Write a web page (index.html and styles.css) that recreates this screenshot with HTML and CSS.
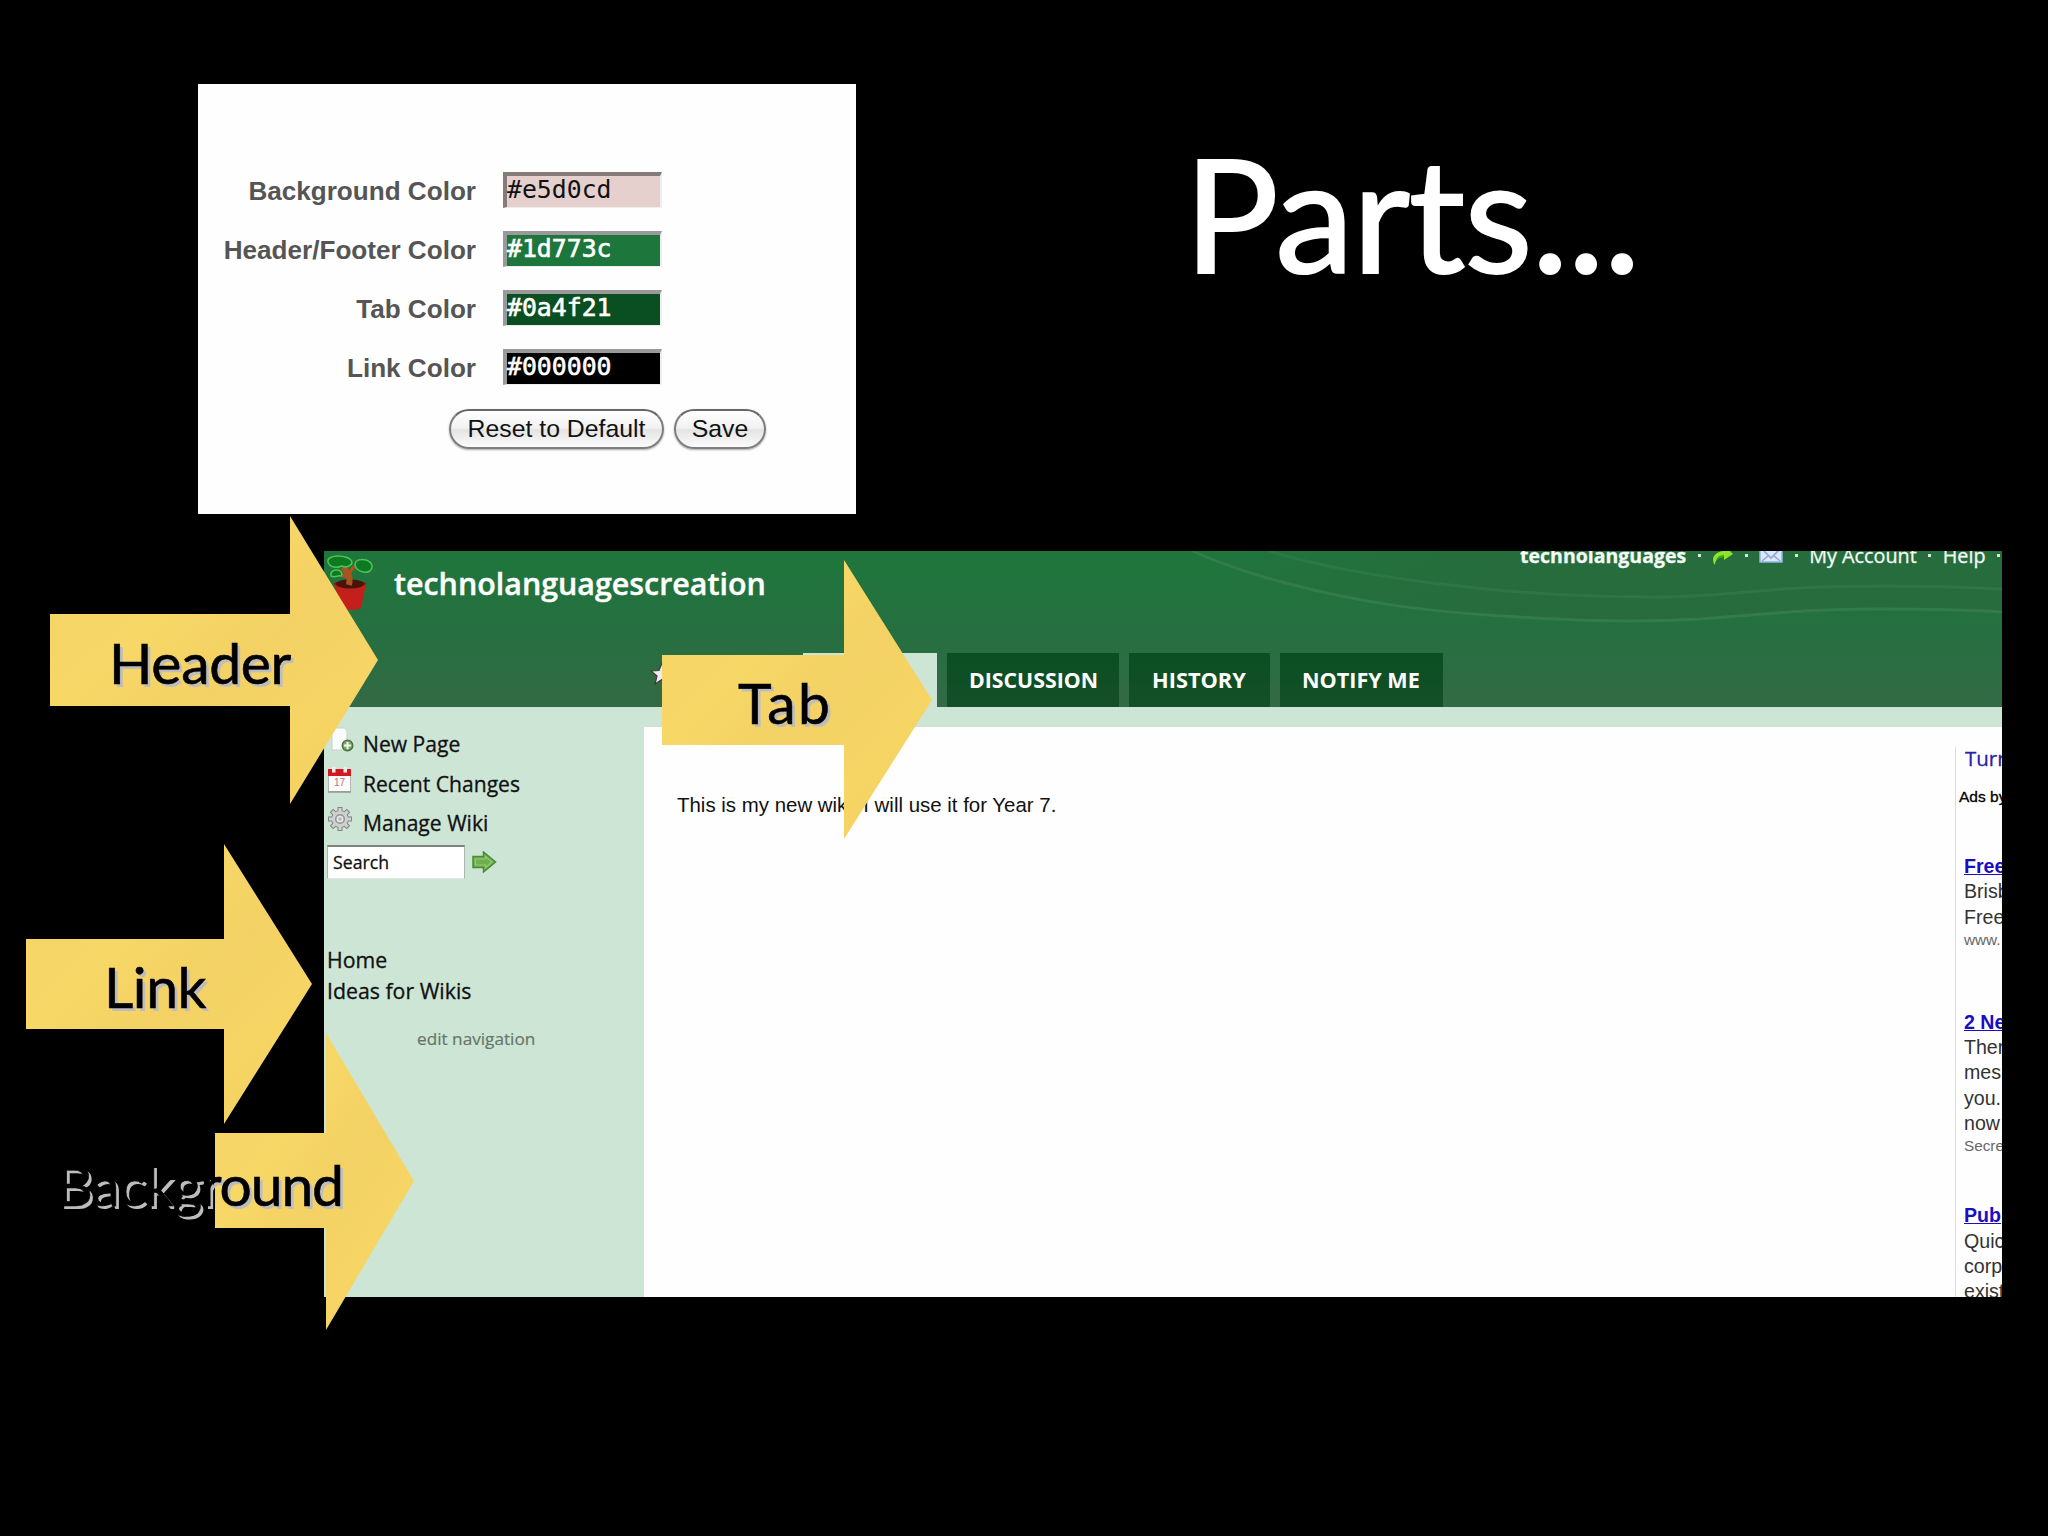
FILE: index.html
```
<!DOCTYPE html>
<html lang="en">
<head>
    <meta charset="UTF-8">
    <meta name="viewport" content="width=device-width, initial-scale=1.0">
    <title>Parts...</title>
    <link rel="stylesheet" href="styles.css">
</head>
<body>
    <div class="slide">
        <div class="top-row">
            <!-- Colour settings -->
            <div class="settings">
                <div class="setting">
                    <label>Background Color</label>
                    <div class="field field-background">#e5d0cd</div>
                </div>
                <div class="setting">
                    <label>Header/Footer Color</label>
                    <div class="field field-header">#1d773c</div>
                </div>
                <div class="setting">
                    <label>Tab Color</label>
                    <div class="field field-tab">#0a4f21</div>
                </div>
                <div class="setting">
                    <label>Link Color</label>
                    <div class="field field-link">#000000</div>
                </div>
                <div class="buttons">
                    <button class="reset">Reset to Default</button>
                    <button class="save">Save</button>
                </div>
            </div>
            <h1>Parts...</h1>
        </div>

        <!-- Wiki page -->
        <div class="wiki">
            <div class="wiki-header">
                <svg class="curves" width="1678" height="156" viewBox="0 0 1678 156">
                    <defs>
                        <linearGradient id="shade" x1="0" x2="1" y1="0" y2="0">
                            <stop offset="0" stop-color="#286a3c" stop-opacity="0"/>
                            <stop offset="0.4" stop-color="#286a3c"/>
                            <stop offset="1" stop-color="#286a3c"/>
                        </linearGradient>
                    </defs>
                    <path fill="url(#shade)" opacity="0.8" d="M868 0C900 14 930 24 962 32C1040 53 1110 61 1180 65C1240 69 1300 72 1376 68C1440 63 1500 57 1560 58C1610 58 1650 59 1678 61V0Z"/>
                    <path class="curve" d="M868 0C900 14 930 24 962 32C1040 53 1110 61 1180 65C1240 69 1300 72 1376 68C1440 63 1500 57 1560 58C1610 58 1650 59 1678 61"/>
                    <path class="curve faint" d="M945 0C990 14 1060 27 1126 34C1190 42 1250 46 1330 46C1400 46 1440 37 1500 36C1570 34 1620 35 1678 38"/>
                </svg>
                <div class="brand-row">
                    <svg class="logo" width="50" height="60" viewBox="0 0 50 60">
                        <path fill="#8c1511" d="M10 32Q26 25 42 32L41 36H11Z"/>
                        <path fill="#c51f1c" d="M10 33Q26 42 42 33L37 57Q29 61 18 57Z"/>
                        <ellipse cx="26" cy="33" rx="14" ry="4.5" fill="#4b1409"/>
                        <path fill="none" stroke="#a8541f" stroke-width="6" d="M25 34C27 26 24 22 19 16"/>
                        <path fill="none" stroke="#a8541f" stroke-width="3.5" d="M25 24Q28 15 34 15M24 26L14 23"/>
                        <g fill="#0c7a20" stroke="#4fc356" stroke-width="1.5">
                            <path d="M4 11C3 7 9 5 14 5C20 5 27 7 28 11C28 15 22 17 18 15C13 17 6 17 4 11Z"/>
                            <path d="M31 14C31 8 38 8 42 9C48 11 50 16 46 20C41 23 32 20 31 14Z"/>
                            <path d="M7 25C6 20 10 19 13 19C17 19 19 23 17 25C14 24 11 27 7 25Z"/>
                        </g>
                    </svg>
                    <div class="wiki-name">technolanguagescreation</div>
                    <div class="account-nav">
                        <b>technolanguages</b>
                        <i></i>
                        <svg width="21" height="18" viewBox="0 0 21 18">
                            <path fill="#8fe32a" d="M11 0C4 1 1 5 1 9Q1 12 3 14C3 9 6 6 12 6V9L21 3L18 0Z"/>
                            <path fill="#2fae1b" d="M12 4Q5 4 4 10Q7 6 12 6Z"/>
                        </svg>
                        <i></i>
                        <svg width="24" height="18" viewBox="0 0 24 18">
                            <path fill="#dfe8fa" stroke="#8eb4e8" stroke-width="1.5" d="M1 -2H23V11H1Z"/>
                            <path fill="none" stroke="#8fa9d6" stroke-width="1.6" d="M3 -2L12 7L21 -2M3 10L9 5M21 10L15 5"/>
                        </svg>
                        <i></i>
                        <span>My Account</span>
                        <i></i>
                        <span>Help</span>
                        <i></i>
                    </div>
                </div>
                <div class="tabs">
                    <svg class="star" width="24" height="24" viewBox="0 0 24 24">
                        <path fill="#eeeaf0" stroke="#3d3a3d" stroke-width="1.2" d="M12 1L15 8.500L23 9L17 14L19 22L12 17.500L5 22L7 14L1 9L9 8.500Z"/>
                    </svg>
                    <div class="tab tab-active"></div>
                    <div class="tab tab-discussion">DISCUSSION</div>
                    <div class="tab tab-history">HISTORY</div>
                    <div class="tab tab-notify">NOTIFY ME</div>
                </div>
            </div>

            <div class="wiki-body">
                <div class="sidebar">
                    <div class="tool">
                        <svg width="27" height="26" viewBox="0 0 27 26">
                            <path fill="#fafcfb" stroke="#c3d3c8" d="M5 1H18L20 4V23H5Z"/>
                            <circle cx="20.500" cy="18.500" r="5.300" fill="#7da565" stroke="#456f38" stroke-width="1.3"/>
                            <path stroke="#f2f8ee" stroke-width="2" d="M20.500 15V22M17 18.500H24"/>
                        </svg>
                        <span>New Page</span>
                    </div>
                    <div class="tool">
                        <svg width="27" height="26" viewBox="0 0 27 26">
                            <path fill="#fbfbfb" stroke="#b5b5b5" d="M1.500 2.500H23.500V24.500H1.500Z"/>
                            <path stroke="#8d9a91" stroke-width="1.500" d="M1 25H24"/>
                            <path fill="#d31920" d="M1 2H24V9H1Z"/>
                            <path fill="#f7e9e9" d="M5 0H8.500V5.500H5ZM16.500 0H20V5.500H16.500Z"/>
                            <text class="day" x="12.500" y="19" text-anchor="middle">17</text>
                        </svg>
                        <span>Recent Changes</span>
                    </div>
                    <div class="tool">
                        <svg width="27" height="26" viewBox="0 0 27 26">
                            <path stroke="#7f8582" stroke-width="5" d="M13 1V25M1 13H25M4.500 4.500L21.500 21.500M21.500 4.500L4.500 21.500"/>
                            <circle cx="13" cy="13" r="9" fill="#7f8582"/>
                            <path stroke="#d2d4d3" stroke-width="3" d="M13 2V24M2 13H24M5.300 5.300L20.700 20.700M20.700 5.300L5.300 20.700"/>
                            <circle cx="13" cy="13" r="8" fill="#cfd1d0"/>
                            <circle cx="13" cy="13" r="4.300" fill="#e3e8e5" stroke="#8e9390" stroke-width="1.500"/>
                            <circle cx="13" cy="13" r="1.800" fill="#b3b8b5"/>
                        </svg>
                        <span>Manage Wiki</span>
                    </div>
                    <div class="search">
                        <div class="search-box">Search</div>
                        <svg width="25" height="22" viewBox="0 0 25 22">
                            <path fill="#6fb04e" stroke="#4a8a35" stroke-width="1.500" d="M1 5.500H11.500V1L23.500 11L11.500 21V16.500H1Z"/>
                            <path fill="none" stroke="#93c878" stroke-width="1.200" d="M3.500 8H13.500V5.500L20 11L13.500 16.500V14H3.500Z"/>
                        </svg>
                    </div>
                    <div class="links">
                        <div>Home</div>
                        <div>Ideas for Wikis</div>
                    </div>
                    <div class="edit-navigation">edit navigation</div>
                </div>

                <div class="content">
                    <p>This is my new wiki. I will use it for Year 7.</p>
                    <div class="ads">
                        <div class="turn">Turn</div>
                        <div class="ads-by">Ads by</div>
                        <div class="ad">
                            <div class="ad-title">Free</div>
                            <div>Brisb</div>
                            <div>Free</div>
                            <div class="ad-url">www.</div>
                        </div>
                        <div class="ad ad-tall">
                            <div class="ad-title">2 Ne</div>
                            <div>Ther</div>
                            <div>mes</div>
                            <div>you.</div>
                            <div>now</div>
                            <div class="ad-url">Secre</div>
                        </div>
                        <div class="ad">
                            <div class="ad-title">Pub</div>
                            <div>Quic</div>
                            <div>corp</div>
                            <div>exist</div>
                        </div>
                    </div>
                </div>
            </div>
        </div>

        <!-- Arrows pointing at the parts -->
        <svg class="defs" width="0" height="0">
            <defs>
                <linearGradient id="gold" x1="0" x2="1" y1="0" y2="1">
                    <stop offset="0" stop-color="#f4d468"/>
                    <stop offset="0.35" stop-color="#f7d766"/>
                    <stop offset="0.55" stop-color="#f3d164"/>
                    <stop offset="0.75" stop-color="#f6d565"/>
                    <stop offset="1" stop-color="#f1cf5c"/>
                </linearGradient>
            </defs>
        </svg>
        <div class="arrow arrow-header">
            <svg width="328" height="288"><path fill="url(#gold)" d="M0 98H240V0L328 144L240 288V190H0Z"/></svg>
            <span>Header</span>
        </div>
        <div class="arrow arrow-tab">
            <svg width="270" height="279"><path fill="url(#gold)" d="M0 95H182V0L270 140L182 279V185H0Z"/></svg>
            <span>Tab</span>
        </div>
        <div class="arrow arrow-link">
            <svg width="286" height="280"><path fill="url(#gold)" d="M0 95H198V0L286 140L198 280V185H0Z"/></svg>
            <span>Link</span>
        </div>
        <div class="arrow arrow-background">
            <svg width="199" height="297"><path fill="url(#gold)" d="M0 100H111V0L199 148L111 297V195H0Z"/></svg>
            <span>Background</span>
        </div>
    </div>
</body>
</html>
```
FILE: styles.css
```
body {
    margin: 0;
    background-color: #000;
    font-family: "Open Sans", "Noto Sans", sans-serif;
}

.slide {
    position: relative;
    width: 2048px;
    height: 1536px;
    box-sizing: border-box;
    padding-top: 84px;
    overflow: hidden;
    background-color: #000;
}

.top-row {
    display: flex;
    height: 430px;
    padding-left: 198px;
}

h1 {
    margin: 0 0 0 328px;
    font-family: Lato, sans-serif;
    font-size: 158px;
    font-weight: 400;
    line-height: 256px;
    letter-spacing: -1.2px;
    color: #fff;
    -webkit-text-stroke: 2px #fff;
}

/* Colour settings */
.settings {
    width: 658px;
    height: 430px;
    box-sizing: border-box;
    padding-top: 88px;
    background-color: #fefefe;
    font-family: "Liberation Sans", Arial, sans-serif;
}

.setting {
    display: flex;
    gap: 27px;
    height: 59px;
}

.setting label {
    width: 278px;
    text-align: right;
    white-space: nowrap;
    font-size: 26.1px;
    font-weight: bold;
    line-height: 39px;
    color: #555;
}

.field {
    width: 159px;
    height: 36px;
    box-sizing: border-box;
    border: 0 solid #9a9a9a;
    border-width: 4px 2px 1px 4px;
    border-right-color: #eee;
    border-bottom-color: #eee;
    font-family: "DejaVu Sans Mono", monospace;
    font-size: 24.8px;
    line-height: 28px;
    color: #fff;
    -webkit-text-stroke: 0.6px #fff;
}

.field-background {
    background-color: #e5d0cd;
    border-top-color: #857b7a;
    border-left-color: #857b7a;
    color: #111;
    -webkit-text-stroke: 0;
}

.field-header {
    background-color: #1d773c;
}

.field-tab {
    background-color: #0a4f21;
}

.field-link {
    background-color: #000;
}

.buttons {
    display: flex;
    gap: 10px;
    padding: 1px 0 0 251px;
}

button {
    height: 40px;
    padding: 0;
    border: 2px solid #7d7d7d;
    border-top-color: #666;
    border-radius: 20px;
    background: linear-gradient(#fff 0%, #f1f1f1 48%, #e4e4e4 52%, #fbfbfb 100%);
    box-shadow: 0 1px 2px rgba(0, 0, 0, 0.35);
    font-family: "Liberation Sans", Arial, sans-serif;
    font-size: 24.8px;
    line-height: 36px;
    color: #111;
}

.reset {
    width: 215px;
}

.save {
    width: 92px;
}

/* Wiki page */
.wiki {
    width: 1678px;
    height: 746px;
    margin: 37px 0 0 324px;
    overflow: hidden;
    background-color: #cde5d5;
}

.wiki-header {
    position: relative;
    height: 156px;
    overflow: hidden;
    background: linear-gradient(#1f763c, #266f40 55%, #336a46);
}

.curves {
    position: absolute;
    top: 0;
    left: 0;
}

.curve {
    fill: none;
    stroke: #3a8050;
    stroke-width: 3;
    opacity: 0.7;
}

.faint {
    opacity: 0.45;
}

.brand-row {
    position: relative;
    display: flex;
    height: 102px;
}

.wiki-name {
    padding-left: 20px;
    font-size: 30.4px;
    font-weight: 600;
    line-height: 65px;
    color: #fff;
    -webkit-text-stroke: 0.4px #fff;
}

.account-nav {
    display: flex;
    gap: 11.5px;
    height: 10px;
    margin-left: auto;
    padding-right: 2px;
    font-size: 19.8px;
    line-height: 10px;
    white-space: nowrap;
    color: #f4faf5;
    -webkit-text-stroke: 0.3px #f4faf5;
}

.account-nav b {
    font-size: 19.5px;
}

.account-nav i {
    width: 3px;
    height: 3px;
    margin-top: 3px;
    background-color: #d5e8da;
}

.tabs {
    position: relative;
    display: flex;
    height: 54px;
}

.star {
    margin: 9px 0 0 326px;
}

.tab {
    box-sizing: border-box;
    height: 54px;
    margin-left: 10px;
    padding-left: 22px;
    background: linear-gradient(#0a4f21, #154f2a);
    font-size: 21.3px;
    font-weight: bold;
    line-height: 54px;
    white-space: nowrap;
    color: #fff;
}

.tab-active {
    width: 134px;
    margin-left: 129px;
    background: #cde5d5;
}

.tab-discussion {
    width: 172px;
}

.tab-history {
    width: 141px;
    padding-left: 23px;
    font-size: 21.8px;
}

.tab-notify {
    width: 163px;
    font-size: 21.6px;
}

.wiki-body {
    display: flex;
    height: 590px;
}

.sidebar {
    width: 320px;
    box-sizing: border-box;
    padding: 17px 0 0 3px;
    font-size: 21.1px;
    color: #111;
    -webkit-text-stroke: 0.3px #111;
}

.tool {
    display: flex;
    gap: 9px;
    height: 39.5px;
    line-height: 39.5px;
}

.tool svg {
    margin-top: 3px;
    -webkit-text-stroke: 0;
}

.day {
    font-family: "Liberation Sans", Arial, sans-serif;
    font-size: 10px;
    fill: #a77;
}

.search {
    display: flex;
    align-items: center;
    gap: 7px;
    margin-top: 2px;
}

.search-box {
    width: 138px;
    height: 34px;
    box-sizing: border-box;
    padding-left: 5px;
    border: 1px solid #a9b5ad;
    border-top: 2px solid #7d8580;
    border-bottom-color: #dfe8e2;
    background-color: #fff;
    font-size: 17.7px;
    line-height: 31px;
}

.links {
    margin-top: 65px;
    font-size: 21.3px;
    line-height: 31px;
}

.edit-navigation {
    margin-top: 21px;
    padding-left: 90px;
    font-size: 17.2px;
    line-height: 24px;
    color: #66756b;
    -webkit-text-stroke: 0.2px #66756b;
}

.content {
    display: flex;
    justify-content: space-between;
    width: 1358px;
    margin-top: 20px;
    background-color: #fefefe;
    font-family: "Liberation Sans", Arial, sans-serif;
}

.content p {
    margin: 65px 0 0 33px;
    font-size: 20.46px;
    line-height: 26px;
    white-space: nowrap;
    color: #111;
}

/* Ads column, cut off at the right edge */
.ads {
    width: 47px;
    height: 550px;
    box-sizing: border-box;
    margin-top: 20px;
    padding-left: 8px;
    border-left: 1.5px solid #ddd;
    overflow: hidden;
    white-space: nowrap;
    font-size: 19.6px;
    line-height: 25.3px;
    color: #333;
}

.turn {
    padding-left: 1px;
    font-family: "Open Sans", sans-serif;
    font-size: 20.5px;
    line-height: 22px;
    color: #2a22a8;
    -webkit-text-stroke: 0.3px #2a22a8;
}

.ads-by {
    margin: 18px 0 47px -5px;
    font-size: 15.5px;
    line-height: 20px;
    color: #000;
    -webkit-text-stroke: 0.3px #000;
}

.ad {
    margin-bottom: 61px;
}

.ad-tall {
    margin-bottom: 48px;
}

.ad-title {
    font-weight: bold;
    text-decoration: underline;
    color: #1a0dc4;
}

.ad-url {
    font-size: 15.3px;
    line-height: 19px;
    color: #666;
}

/* Arrows */
.defs {
    position: absolute;
}

.arrow {
    position: absolute;
    display: flex;
    align-items: center;
    box-sizing: border-box;
    padding-top: 4px;
    font-family: Lato, sans-serif;
    font-size: 57px;
    white-space: nowrap;
    color: #000;
}

.arrow svg {
    position: absolute;
    top: 0;
    left: 0;
}

.arrow span {
    position: relative;
    -webkit-text-stroke: 0.6px #000;
    text-shadow: 3px 3px 0 #bdbdbd;
}

.arrow-header {
    left: 50px;
    top: 516px;
    width: 328px;
    height: 288px;
    padding-left: 59px;
    letter-spacing: -0.3px;
}

.arrow-tab {
    left: 662px;
    top: 560px;
    width: 270px;
    height: 279px;
    padding-left: 76px;
    letter-spacing: 2.2px;
}

.arrow-link {
    left: 26px;
    top: 844px;
    width: 286px;
    height: 280px;
    padding-left: 78px;
    letter-spacing: -0.4px;
}

.arrow-background {
    left: 215px;
    top: 1033px;
    width: 199px;
    height: 297px;
    letter-spacing: -1.1px;
}

.arrow-background span {
    margin-left: -159px;
}
```
